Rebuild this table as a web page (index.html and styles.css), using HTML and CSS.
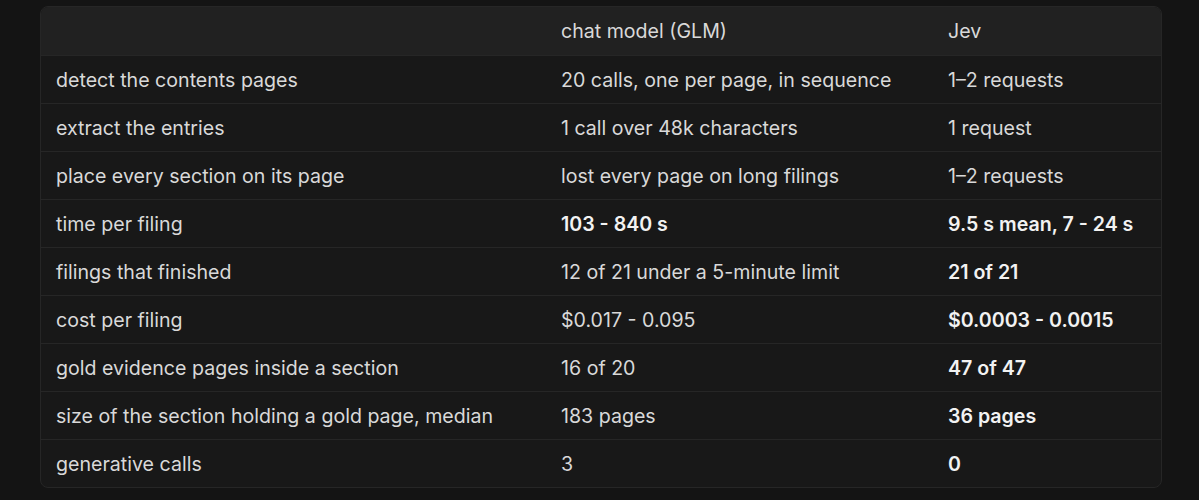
FILE: index.html
```html
<!DOCTYPE html>
<html lang="en">
<head>
    <meta charset="UTF-8">
    <title>Comparison</title>
    <link rel="stylesheet" href="styles.css">
</head>
<body>
    <div class="wrap">
        <table class="compare">
            <thead>
                <tr><th></th><th>chat model (GLM)</th><th>Jev</th></tr>
            </thead>
            <tbody>
                <tr><td>detect the contents pages</td><td>20 calls, one per page, in sequence</td><td>1–2 requests</td></tr>
                <tr><td>extract the entries</td><td>1 call over 48k characters</td><td>1 request</td></tr>
                <tr><td>place every section on its page</td><td>lost every page on long filings</td><td>1–2 requests</td></tr>
                <tr><td>time per filing</td><td class="strong">103 - 840 s</td><td class="strong">9.5 s mean, 7 - 24 s</td></tr>
                <tr><td>filings that finished</td><td>12 of 21 under a 5-minute limit</td><td class="strong">21 of 21</td></tr>
                <tr><td>cost per filing</td><td>$0.017 - 0.095</td><td class="strong">$0.0003 - 0.0015</td></tr>
                <tr><td>gold evidence pages inside a section</td><td>16 of 20</td><td class="strong">47 of 47</td></tr>
                <tr><td>size of the section holding a gold page, median</td><td>183 pages</td><td class="strong">36 pages</td></tr>
                <tr><td>generative calls</td><td>3</td><td class="strong">0</td></tr>
            </tbody>
        </table>
    </div>
</body>
</html>
```

FILE: styles.css
```css
body {
    margin: 0;
    background: #141414;
    font-family: Inter, "Noto Sans", sans-serif;
    color: #d9d9d9;
}

.wrap {
    padding: 6px 37px 0 40px;
}

.compare {
    width: 100%;
    border-collapse: separate;
    border-spacing: 0;
    background: #181818;
    border: 1px solid #262626;
    border-radius: 8px;
    overflow: hidden;
    font-size: 19.6px;
}

.compare th,
.compare td {
    height: 47px;
    padding: 0 15px;
    text-align: left;
    font-weight: 400;
    border-top: 1px solid #262626;
    white-space: nowrap;
}

.compare th {
    background: #212121;
    border-top: none;
    height: 48px;
}

.compare td:nth-child(1),
.compare th:nth-child(1) { width: 475px; }
.compare td:nth-child(2),
.compare th:nth-child(2) { width: 357px; }

.compare .strong {
    font-weight: 600;
    color: #f2f2f2;
}
```
